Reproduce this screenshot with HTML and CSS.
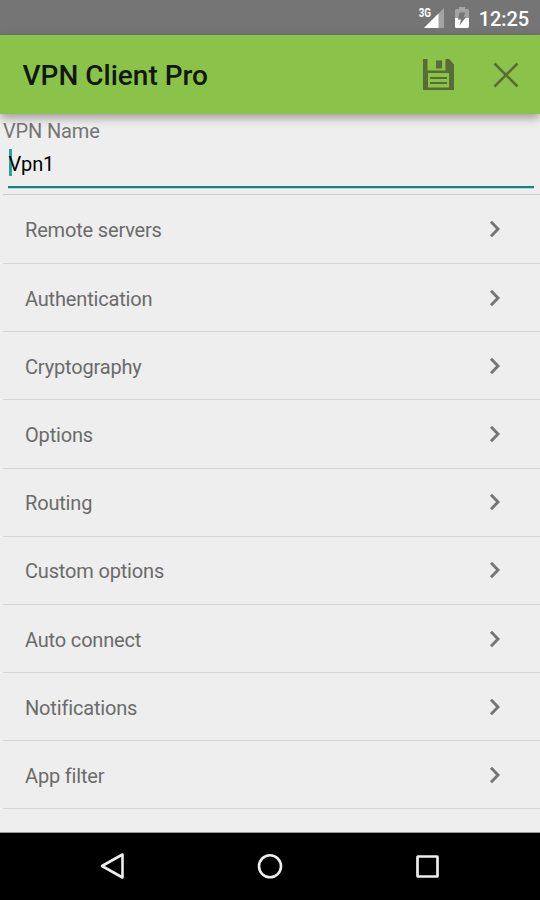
FILE: index.html
```
<!DOCTYPE html>
<html lang="en">
<head>
<meta charset="utf-8">
<title>VPN Client Pro</title>
<link rel="stylesheet" href="styles.css">
</head>
<body>
<svg class="defs" aria-hidden="true"><symbol id="chevron" viewBox="0 0 12 18"><path d="M2 1.800l7 7.200L2 16.200" fill="none" stroke="#757575" stroke-width="2.900"/></symbol></svg>
<div class="status">
  <span class="network">3G</span>
  <svg class="signal" width="20" height="20" viewBox="0 0 20 20"><path d="M20 0v20H0z" fill="#a3a3a3"/><path d="M14.500 5.500V20H0z" fill="#fff"/></svg>
  <svg class="battery" width="14" height="21" viewBox="0 0 14 21"><path d="M4 0h6v2h2.500Q14 2 14 3.500V11H0V3.500Q0 2 1.500 2H4z" fill="#a3a3a3"/><path d="M0 11h14v8.500Q14 21 12.500 21h-11Q0 21 0 19.500z" fill="#fff"/><path d="M4.500 5.500h6L8.500 10H11L4.500 18.500 6 12.500H3z" fill="#757575"/></svg>
  <span class="clock">12:25</span>
</div>
<header class="toolbar">
  <h1>VPN Client Pro</h1>
  <svg class="save" width="31" height="31" viewBox="0 0 31 31"><path fill="#566d35" fill-rule="evenodd" d="M0 0h4.500v11.500h18V0H26l5 5.500V31H0zM5 14v14.500h21V14z"/><path fill="#566d35" d="M13 1.500h6v8h-6zM7 18h17v2H7zM7 23h17v2H7z"/></svg>
  <svg class="close" width="26" height="26" viewBox="0 0 26 26"><path d="M1.500 1.500l23 23M24.500 1.500l-23 23" stroke="#566d35" stroke-width="2.600"/></svg>
</header>
<main>
  <section class="name">
    <label for="vpn">VPN Name</label>
    <div class="field" id="vpn"><span class="caret"></span><span>Vpn1</span></div>
  </section>
  <ul class="menu">
    <li><span>Remote servers</span><svg><use href="#chevron"/></svg></li>
    <li><span>Authentication</span><svg><use href="#chevron"/></svg></li>
    <li><span>Cryptography</span><svg><use href="#chevron"/></svg></li>
    <li><span>Options</span><svg><use href="#chevron"/></svg></li>
    <li><span>Routing</span><svg><use href="#chevron"/></svg></li>
    <li><span>Custom options</span><svg><use href="#chevron"/></svg></li>
    <li><span>Auto connect</span><svg><use href="#chevron"/></svg></li>
    <li><span>Notifications</span><svg><use href="#chevron"/></svg></li>
    <li><span>App filter</span><svg><use href="#chevron"/></svg></li>
  </ul>
</main>
<nav>
  <svg width="26" height="28" viewBox="0 0 26 28"><path d="M23.500 2.500v23L3 14z" fill="none" stroke="#eee" stroke-width="2.600" stroke-linejoin="round"/></svg>
  <svg width="26" height="26" viewBox="0 0 26 26"><circle cx="13" cy="13.300" r="11" fill="none" stroke="#eee" stroke-width="2.600"/></svg>
  <svg width="24" height="24" viewBox="0 0 24 24"><rect x="2.500" y="2.500" width="20" height="20" rx=".5" fill="none" stroke="#eee" stroke-width="2.700"/></svg>
</nav>
</body>
</html>
```
FILE: styles.css
```
* { box-sizing: border-box; }
body {
  margin: 0;
  width: 540px;
  height: 900px;
  display: flex;
  flex-direction: column;
  overflow: hidden;
  background: #eee;
  font-family: Roboto, sans-serif;
}
svg { display: block; flex: none; }
.defs { position: absolute; width: 0; height: 0; }
.status {
  height: 35px;
  flex: none;
  display: flex;
  justify-content: flex-end;
  align-items: flex-start;
  padding-right: 11px;
  background: #757575;
  color: #fff;
}
.network { font-size: 12px; font-weight: 700; line-height: 13px; margin: 7px -7px 0 0; transform: scaleX(.82); transform-origin: right; }
.signal { margin-top: 8px; }
.battery { margin: 7px 9.500px 0 11px; }
.clock { font-size: 20px; font-weight: 500; line-height: 24px; margin-top: 7px; letter-spacing: -.1px; }
.toolbar {
  position: relative;
  height: 79px;
  flex: none;
  display: flex;
  align-items: center;
  padding: 0 21px 0 22.5px;
  background: #8bc34a;
  box-shadow: 0 4px 9px rgba(0, 0, 0, .34);
}
h1 { margin: 3px auto 0 0; font-size: 28px; line-height: 34px; font-weight: 500; color: #11180a; }
.save { margin-right: 39px; }
main { height: 719px; flex: none; border-bottom: 1px solid #999; }
.name {
  height: 81.3px;
  margin-left: 3px;
  padding-top: 5px;
  border-bottom: 1px solid #ccc;
  display: flex;
  flex-direction: column;
}
label { font-size: 20px; line-height: 24px; letter-spacing: -.15px; color: #757575; }
.field {
  position: relative;
  height: 45px;
  margin: 0 6px 0 5px;
  padding: 8px 0 0 .5px;
  border-bottom: 2px solid #16857a;
  box-shadow: 0 1px 0 #a9dbd5;
  color: #000;
  font-size: 20px;
  line-height: 26px;
  letter-spacing: -.15px;
}
.field span:last-child { position: relative; }
.caret { position: absolute; left: .5px; top: 6px; width: 3px; height: 27px; background: #26a69a; }
.menu { list-style: none; margin: 0 0 0 3px; padding: 0; }
.menu li {
  height: 68.2px;
  display: flex;
  align-items: center;
  justify-content: space-between;
  padding: 2px 39px 0 22px;
  border-bottom: 1px solid #d5d5d5;
  color: #6b6b6b;
  font-size: 20px;
  letter-spacing: -.17px;
}
.menu li:first-child { height: 68.7px; }
.menu svg { width: 12px; height: 18px; margin-top: -2px; }
nav {
  height: 67px;
  flex: none;
  display: flex;
  align-items: center;
  justify-content: space-between;
  padding: 0 101px 1px 99px;
  background: #000;
}
```
